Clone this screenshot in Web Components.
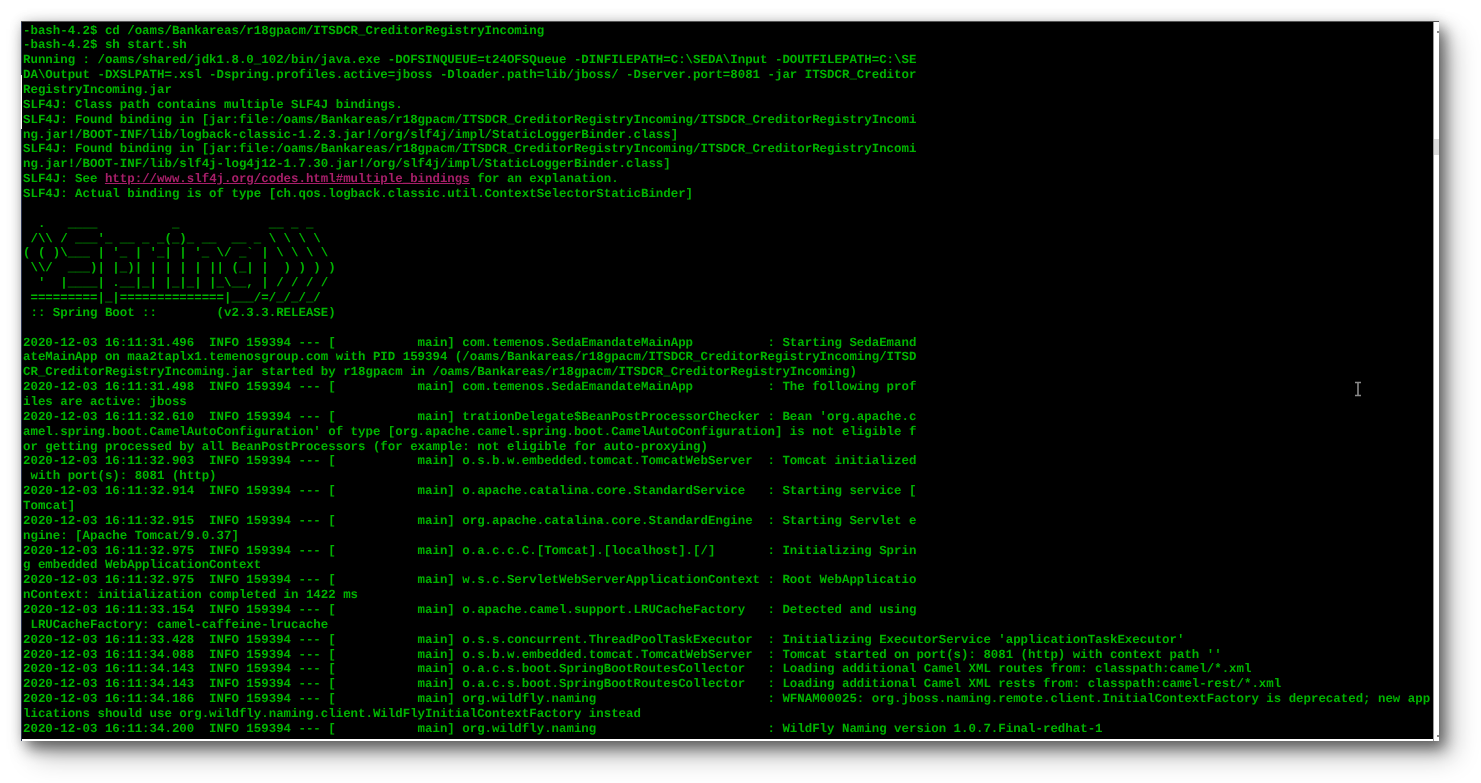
<!DOCTYPE html>
<html><head><meta charset="utf-8"><style>html,body{margin:0;padding:0;background:#fff;height:100%;overflow:hidden}</style></head><body>
<shot-page><term-window><term-screen>
<term-line>-bash-4.2$ cd /oams/Bankareas/r18gpacm/ITSDCR_CreditorRegistryIncoming</term-line>
<term-line>-bash-4.2$ sh start.sh</term-line>
<term-line>Running : /oams/shared/jdk1.8.0_102/bin/java.exe -DOFSINQUEUE=t24OFSQueue -DINFILEPATH=C:\SEDA\Input -DOUTFILEPATH=C:\SE</term-line>
<term-line>DA\Output -DXSLPATH=.xsl -Dspring.profiles.active=jboss -Dloader.path=lib/jboss/ -Dserver.port=8081 -jar ITSDCR_Creditor</term-line>
<term-line>RegistryIncoming.jar</term-line>
<term-line>SLF4J: Class path contains multiple SLF4J bindings.</term-line>
<term-line>SLF4J: Found binding in [jar:file:/oams/Bankareas/r18gpacm/ITSDCR_CreditorRegistryIncoming/ITSDCR_CreditorRegistryIncomi</term-line>
<term-line>ng.jar!/BOOT-INF/lib/logback-classic-1.2.3.jar!/org/slf4j/impl/StaticLoggerBinder.class]</term-line>
<term-line>SLF4J: Found binding in [jar:file:/oams/Bankareas/r18gpacm/ITSDCR_CreditorRegistryIncoming/ITSDCR_CreditorRegistryIncomi</term-line>
<term-line>ng.jar!/BOOT-INF/lib/slf4j-log4j12-1.7.30.jar!/org/slf4j/impl/StaticLoggerBinder.class]</term-line>
<term-line>SLF4J: See <term-link>http://www.slf4j.org/codes.html#multiple_bindings</term-link> for an explanation.</term-line>
<term-line>SLF4J: Actual binding is of type [ch.qos.logback.classic.util.ContextSelectorStaticBinder]</term-line>
<term-line></term-line>
<term-line>  .   ____          _            __ _ _</term-line>
<term-line> /\\ / ___'_ __ _ _(_)_ __  __ _ \ \ \ \</term-line>
<term-line>( ( )\___ | '_ | '_| | '_ \/ _` | \ \ \ \</term-line>
<term-line> \\/  ___)| |_)| | | | | || (_| |  ) ) ) )</term-line>
<term-line>  '  |____| .__|_| |_|_| |_\__, | / / / /</term-line>
<term-line> =========|_|==============|___/=/_/_/_/</term-line>
<term-line> :: Spring Boot ::        (v2.3.3.RELEASE)</term-line>
<term-line></term-line>
<term-line>2020-12-03 16:11:31.496  INFO 159394 --- [           main] com.temenos.SedaEmandateMainApp          : Starting SedaEmand</term-line>
<term-line>ateMainApp on maa2taplx1.temenosgroup.com with PID 159394 (/oams/Bankareas/r18gpacm/ITSDCR_CreditorRegistryIncoming/ITSD</term-line>
<term-line>CR_CreditorRegistryIncoming.jar started by r18gpacm in /oams/Bankareas/r18gpacm/ITSDCR_CreditorRegistryIncoming)</term-line>
<term-line>2020-12-03 16:11:31.498  INFO 159394 --- [           main] com.temenos.SedaEmandateMainApp          : The following prof</term-line>
<term-line>iles are active: jboss</term-line>
<term-line>2020-12-03 16:11:32.610  INFO 159394 --- [           main] trationDelegate$BeanPostProcessorChecker : Bean 'org.apache.c</term-line>
<term-line>amel.spring.boot.CamelAutoConfiguration' of type [org.apache.camel.spring.boot.CamelAutoConfiguration] is not eligible f</term-line>
<term-line>or getting processed by all BeanPostProcessors (for example: not eligible for auto-proxying)</term-line>
<term-line>2020-12-03 16:11:32.903  INFO 159394 --- [           main] o.s.b.w.embedded.tomcat.TomcatWebServer  : Tomcat initialized</term-line>
<term-line> with port(s): 8081 (http)</term-line>
<term-line>2020-12-03 16:11:32.914  INFO 159394 --- [           main] o.apache.catalina.core.StandardService   : Starting service [</term-line>
<term-line>Tomcat]</term-line>
<term-line>2020-12-03 16:11:32.915  INFO 159394 --- [           main] org.apache.catalina.core.StandardEngine  : Starting Servlet e</term-line>
<term-line>ngine: [Apache Tomcat/9.0.37]</term-line>
<term-line>2020-12-03 16:11:32.975  INFO 159394 --- [           main] o.a.c.c.C.[Tomcat].[localhost].[/]       : Initializing Sprin</term-line>
<term-line>g embedded WebApplicationContext</term-line>
<term-line>2020-12-03 16:11:32.975  INFO 159394 --- [           main] w.s.c.ServletWebServerApplicationContext : Root WebApplicatio</term-line>
<term-line>nContext: initialization completed in 1422 ms</term-line>
<term-line>2020-12-03 16:11:33.154  INFO 159394 --- [           main] o.apache.camel.support.LRUCacheFactory   : Detected and using</term-line>
<term-line> LRUCacheFactory: camel-caffeine-lrucache</term-line>
<term-line>2020-12-03 16:11:33.428  INFO 159394 --- [           main] o.s.s.concurrent.ThreadPoolTaskExecutor  : Initializing ExecutorService 'applicationTaskExecutor'</term-line>
<term-line>2020-12-03 16:11:34.088  INFO 159394 --- [           main] o.s.b.w.embedded.tomcat.TomcatWebServer  : Tomcat started on port(s): 8081 (http) with context path ''</term-line>
<term-line>2020-12-03 16:11:34.143  INFO 159394 --- [           main] o.a.c.s.boot.SpringBootRoutesCollector   : Loading additional Camel XML routes from: classpath:camel/*.xml</term-line>
<term-line>2020-12-03 16:11:34.143  INFO 159394 --- [           main] o.a.c.s.boot.SpringBootRoutesCollector   : Loading additional Camel XML rests from: classpath:camel-rest/*.xml</term-line>
<term-line>2020-12-03 16:11:34.186  INFO 159394 --- [           main] org.wildfly.naming                       : WFNAM00025: org.jboss.naming.remote.client.InitialContextFactory is deprecated; new app</term-line>
<term-line>lications should use org.wildfly.naming.client.WildFlyInitialContextFactory instead</term-line>
<term-line>2020-12-03 16:11:34.200  INFO 159394 --- [           main] org.wildfly.naming                       : WildFly Naming version 1.0.7.Final-redhat-1</term-line>
</term-screen></term-window></shot-page>
<script>
function def(name, css, html){
  customElements.define(name, class extends HTMLElement{
    constructor(){super();const r=this.attachShadow({mode:'open'});r.innerHTML='<style>'+css+'</style>'+html;}
  });
}
def('shot-page',':host{display:block;box-sizing:border-box;width:1481px;height:783px;padding:21px 0 0 21px;background:#fff;overflow:hidden}','<slot></slot>');
def('term-window',`:host{display:flex;box-sizing:border-box;width:1418px;height:720px;background:#fff;border-top:1px solid #555;box-shadow:0 0 12px rgba(0,0,0,.14),6px 8px 14px rgba(0,0,0,.5),14px 16px 26px rgba(0,0,0,.22)}
.bar{flex:none;width:5px;background:#fff;border-left:1px solid #9a9a9a;position:relative}
.thumb{position:absolute;top:117px;left:0;right:0;height:16px;background:#dcdcdc}
.dot{position:absolute;right:0;width:2px;height:2px;background:#888}
.main{flex:1;min-width:0;display:flex;flex-direction:column;padding-left:1px;padding-bottom:2px;background:linear-gradient(#2a3350 0 53px,#fff 53px 107px,#2a3350 107px) left top/1px 100% no-repeat,#fff}`,
'<div class="main"><slot></slot></div><div class="bar"><div class="thumb"></div><span class="dot" style="top:9px"></span><span class="dot" style="bottom:4px"></span></div>');
def('term-screen',`:host{display:block;flex:1;min-height:0;overflow:hidden;background:#000;color:#00b400;position:relative}
.text{padding:1.5px 0 0 1px;font:700 12.41px/14.87px "Liberation Mono",monospace;filter:blur(.75px);text-rendering:geometricPrecision}
svg{position:absolute;left:1332px;top:359px;filter:blur(.5px)}`,
'<div class="text"><slot></slot></div><svg width="8" height="16" viewBox="0 0 8 16" aria-hidden="true"><path d="M1 1.5h6M4 1.5v13M1 14.5h6" fill="none" stroke="#8a8a8a" stroke-width="1.6"/></svg>');
def('term-line',':host{display:block;height:14.87px;white-space:pre}','<slot></slot>');
def('term-link',':host{display:inline;color:#a81f6a;text-decoration:underline}','<slot></slot>');
</script>
</body></html>
